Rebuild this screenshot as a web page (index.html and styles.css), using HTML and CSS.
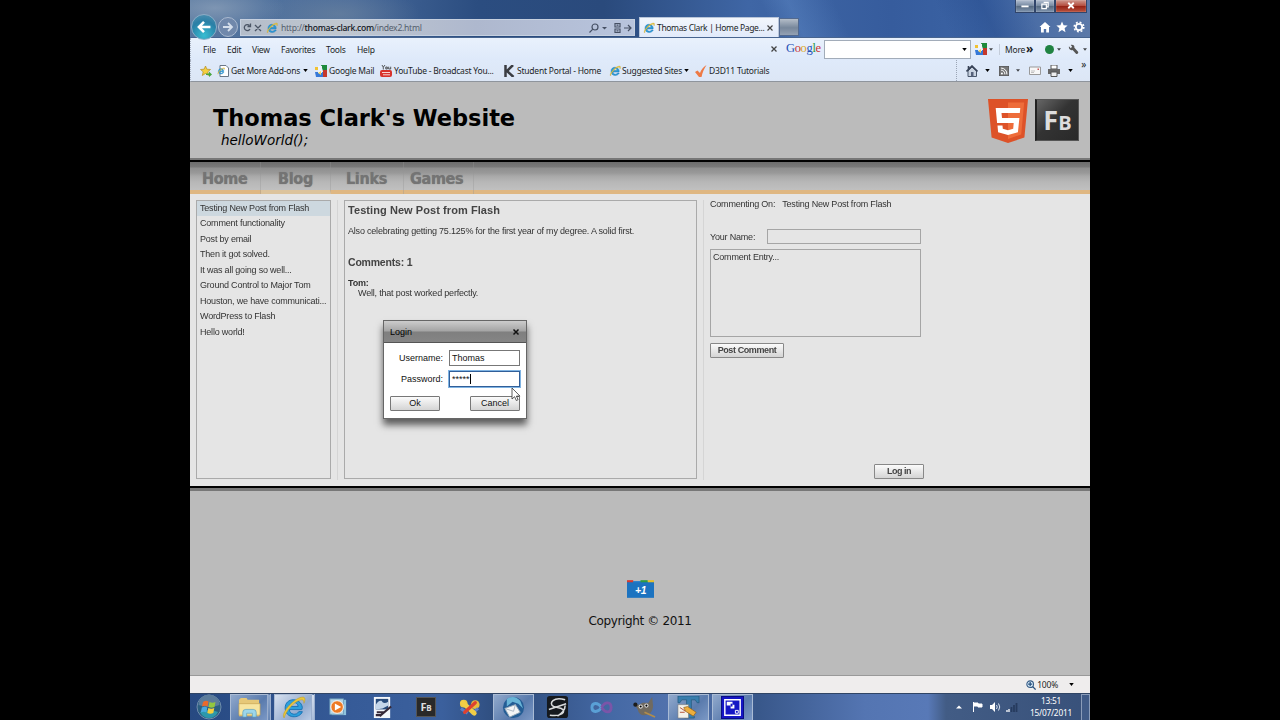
FILE: index.html
```
<!DOCTYPE html>
<html lang="en">
<head>
    <meta charset="UTF-8">
    <title>Thomas Clark | Home Page</title>
    <link rel="stylesheet" href="styles.css">
</head>
<body>
<svg class="defs">
    <symbol id="ie" viewBox="0 0 24 24">
        <path d="M20 14H8c.3 5 7 6 9 2h3.500C18 23 4 23 4 12.500S19 2 20.500 12zM8 11h8.500C16 6 9 6 8 11z" fill="#2d9fdc" stroke="#1672b4" stroke-width=".9"/>
        <path d="M3 22C-1 18 13 2 21 2c3 0 2 4 1 6 0-3-1-4-4-3C12 7 5 15 3 22z" fill="#e9c63b" stroke="#b99a28" stroke-width=".5"/>
    </symbol>
    <symbol id="caret" viewBox="0 0 6 4"><path d="M0 0h6L3 4z"/></symbol>
    <symbol id="goog" viewBox="0 0 12 12">
        <path d="M6 0h6v6H8z" fill="#1d8a3c"/><path d="M8 5h4v7H8z" fill="#c5392c"/><path d="M0 7h8v5H1z" fill="#3679d8"/><path d="M0 2h3v3H0z" fill="#f1c232"/><path d="M3 1h4v7H3z" fill="#eef3fb"/><path d="M3 8l3-2v4z" fill="#f5d65a"/>
    </symbol>
</svg>
<div class="screen">
    <div class="titlebar">
        <div class="winbtns">
            <span class="wb"><svg viewBox="0 0 20 12"><path d="M6 6h8v2H6z" fill="#fff"/></svg></span>
            <span class="wb"><svg viewBox="0 0 20 12"><path d="M8.500 2.500h5v5h-2M6.500 4.500h5v5h-5z" fill="none" stroke="#fff" stroke-width="1.300"/></svg></span>
            <span class="wb close"><svg viewBox="0 0 32 12"><path d="M13 3l6 6M19 3l-6 6" stroke="#fff" stroke-width="2"/></svg></span>
        </div>
        <div class="addressrow">
            <span class="back"><svg viewBox="0 0 26 26"><path d="M20 13H8M13 7.500L7.500 13l5.500 5.500" fill="none" stroke="#fff" stroke-width="2.800"/></svg></span>
            <span class="fwd"><svg viewBox="0 0 18 18"><path d="M4 9h9M9 5l4 4-4 4" fill="none" stroke="#d4deeb" stroke-width="1.800"/></svg></span>
            <div class="address">
                <svg class="reload" viewBox="0 0 20 10"><path d="M6.500 2.500A3 3 0 1 0 7 6M7.500 .5v3h-3M12 2l6 6M18 2l-6 6" fill="none" stroke="#4b5565" stroke-width="1.300"/></svg>
                <svg class="i12"><use href="#ie"/></svg>
                <span class="url">http://<b>thomas-clark.com</b>/index2.html</span>
                <svg class="search" viewBox="0 0 44 12"><g fill="none" stroke="#465064" stroke-width="1.200"><circle cx="7" cy="5" r="3"/><path d="M4.800 7.200L1.500 10.500M27 1.500h5v3.500h-5zM27 7h5v3.500h-5zM28.500 3.200h2M28.500 8.800h2M36 6h7M40 3l3 3-3 3"/></g><path d="M14 5h5l-2.500 2.600z" fill="#465064"/></svg>
            </div>
            <div class="tab">
                <svg class="i12"><use href="#ie"/></svg>
                <span class="tabtitle">Thomas Clark | Home Page...</span>
                <svg class="x" viewBox="0 0 8 8"><path d="M1.500 1.500l5 5M6.500 1.500l-5 5" stroke="#444" stroke-width="1.200"/></svg>
            </div>
            <div class="newtab"></div>
            <div class="tools">
                <svg viewBox="0 0 12 12"><path d="M6 1l5.500 5H10v5.500H7.200V8H4.800v3.500H2V6H.5z" fill="#fff"/></svg>
                <svg viewBox="0 0 12 12"><path d="M6 .5l1.600 3.800 4 .3-3 2.600.9 4L6 9l-3.500 2.200.9-4-3-2.600 4-.3z" fill="#fff"/></svg>
                <svg viewBox="0 0 12 12"><circle cx="6" cy="6" r="3.200" fill="none" stroke="#fff" stroke-width="1.800"/><circle cx="6" cy="6" r="4.800" fill="none" stroke="#fff" stroke-width="1.600" stroke-dasharray="1.900 1.870"/></svg>
            </div>
        </div>
    </div>

    <div class="menubar">
        <div class="menu"><span>File</span><span>Edit</span><span>View</span><span>Favorites</span><span>Tools</span><span>Help</span></div>
        <div class="gbar">
            <svg class="x" viewBox="0 0 8 8"><path d="M1.500 1.500l5 5M6.500 1.500l-5 5" stroke="#444" stroke-width="1.300"/></svg>
            <span class="google"><i class="b">G</i><i class="r">o</i><i class="y">o</i><i class="b">g</i><i class="g">l</i><i class="r">e</i></span>
            <div class="gsearch"><svg class="caret"><use href="#caret"/></svg></div>
            <svg class="i12"><use href="#goog"/></svg>
            <svg class="caret small"><use href="#caret"/></svg>
            <span class="more">More <b>»</b></span>
            <span class="dot"></span>
            <svg class="caret small"><use href="#caret"/></svg>
            <svg class="wrench" viewBox="0 0 12 12"><path d="M1 2.500l2 2 1.500-1.500L3 1c2-1 4.500.5 4 3l4 4.500c.8 1.500-1 3-2.300 2L5 6.500C2.500 7.500.5 5 1 2.500z" fill="#555"/></svg>
            <svg class="caret small"><use href="#caret"/></svg>
        </div>
    </div>

    <div class="favbar">
        <div class="favs">
            <svg class="i12" viewBox="0 0 12 12"><path d="M5.500 1l1.400 3.200 3.600.3-2.700 2.300.8 3.700-3.100-2-3.200 2 .9-3.700L.5 4.500l3.600-.3z" fill="#f6cf3e" stroke="#b58e1f" stroke-width=".7"/><path d="M6 8.500h3V6.500l3 3-3 2.500v-2H6z" fill="#46a73e"/></svg>
            <div class="fav f1"><svg class="i12" viewBox="0 0 12 12"><path d="M3 .5h6l2.500 2.500v8.500H3z" fill="#fff" stroke="#6b7786"/><svg x="0" y="2" width="8" height="8"><use href="#ie"/></svg></svg><span>Get More Add-ons</span><svg class="caret"><use href="#caret"/></svg></div>
            <div class="fav f2"><svg class="i12"><use href="#goog"/></svg><span>Google Mail</span></div>
            <div class="fav f3"><svg class="i12" viewBox="0 0 12 12"><rect y="5" width="12" height="7" rx="2" fill="#d8332c"/><path d="M2 7.500h8M3 9.800h7" stroke="#fff" stroke-width=".8"/><path d="M2 0l1.300 2.200V4.500M5 0L3.300 2.200M5.800 2h1.500v2H5.800zM8.700 1.700V4h2V1.700" fill="none" stroke="#333" stroke-width=".8"/></svg><span>YouTube - Broadcast You...</span></div>
            <div class="fav f4"><svg class="i12" viewBox="0 0 12 12"><path d="M2.500 0v12M10 0L4 6l6.500 6" fill="none" stroke="#3b3d42" stroke-width="2.500"/></svg><span>Student Portal - Home</span></div>
            <div class="fav f5"><svg class="i12"><use href="#ie"/></svg><span>Suggested Sites</span><svg class="caret"><use href="#caret"/></svg></div>
            <div class="fav f6"><svg class="i12" viewBox="0 0 12 12"><path d="M0 7l2.500-1.500L5 8c1-3 3-6 6.500-8C9 4 7.500 7.500 6.500 12H4z" fill="#ee7a45"/></svg><span>D3D11 Tutorials</span></div>
        </div>
        <div class="cmds">
            <svg class="i12" viewBox="0 0 12 12"><path d="M2 6l4-4 4.500 4v5.500H2z" fill="#c8d2e0" stroke="#49566a"/><path d="M.5 6.500L6 1l5.500 5.500M2.500 1v3" fill="none" stroke="#374256" stroke-width="1.600"/><path d="M5 7h2.500v4.500H5z" fill="#55617a"/></svg>
            <svg class="caret"><use href="#caret"/></svg>
            <svg class="i10" viewBox="0 0 12 12"><rect x=".5" y=".5" width="11" height="11" fill="#777" stroke="#555"/><path d="M2.500 5A4.500 4.500 0 0 1 7 10M2.500 2.500A7 7 0 0 1 9.500 10" fill="none" stroke="#fff" stroke-width="1.200"/><circle cx="3.500" cy="9" r="1.200" fill="#fff"/></svg>
            <svg class="caret small"><use href="#caret"/></svg>
            <svg class="i12" viewBox="0 0 12 12"><path d="M.5 2h11v7.500H.5z" fill="#f7f7f7" stroke="#999"/><path d="M8.500 3.500h1.500V5H8.500z" fill="#c55"/><path d="M2 6h4M2 7.500h3" stroke="#aaa" stroke-width=".7"/></svg>
            <svg class="i12" viewBox="0 0 12 12"><path d="M3 0h6v4H3z" fill="#fff" stroke="#555"/><path d="M0 4h12v5H0z" fill="#666"/><path d="M3 7h6v4.500H3z" fill="#eee" stroke="#555"/></svg>
            <svg class="caret"><use href="#caret"/></svg>
            <span class="chev">»</span>
        </div>
    </div>

    <div class="header">
        <div class="brand">
            <h1>Thomas Clark's Website</h1>
            <p>helloWorld();</p>
        </div>
        <div class="logos">
            <svg class="html5" viewBox="0 0 40 44"><path d="M0 0h40l-3.600 38.500L20 44 3.600 38.500z" fill="#dd5228"/><path d="M20 3.500h16.200l-3 32L20 40z" fill="#ee6c3a"/><path d="M7.700 9h24.600l-.5 5H13.500l.5 5h17.400l-1.500 14.200L20 36l-9.900-2.800-.6-6.700h5l.3 3.200 5.200 1.500 5.200-1.500.5-5.700H9.100z" fill="#fff"/></svg>
            <div class="fb">F<small>B</small></div>
        </div>
    </div>

    <div class="nav"><a class="n1">Home</a><a class="n2">Blog</a><a class="n3">Links</a><a class="n4">Games</a></div>

    <div class="content">
        <div class="blog">
            <ul class="posts">
                <li class="selected">Testing New Post from Flash</li>
                <li>Comment functionality</li>
                <li>Post by email</li>
                <li>Then it got solved.</li>
                <li>It was all going so well...</li>
                <li>Ground Control to Major Tom</li>
                <li>Houston, we have communicati...</li>
                <li>WordPress to Flash</li>
                <li>Hello world!</li>
            </ul>
            <div class="divider"></div>
            <div class="post">
                <h2>Testing New Post from Flash</h2>
                <p class="body">Also celebrating getting 75.125% for the first year of my degree. A solid first.</p>
                <h3>Comments: 1</h3>
                <h4>Tom:</h4>
                <p class="reply">Well, that post worked perfectly.</p>
            </div>
            <div class="divider"></div>
            <div class="form">
                <div class="on"><span>Commenting On:</span><span>Testing New Post from Flash</span></div>
                <div class="name"><span>Your Name:</span><div class="field"></div></div>
                <div class="entry">Comment Entry...</div>
                <div class="btn post-btn">Post Comment</div>
                <div class="btn login-btn">Log in</div>
            </div>
        </div>
        <div class="dialog">
            <div class="dtitle"><span>Login</span><svg viewBox="0 0 8 8"><path d="M1.500 1.500l5 5M6.500 1.500l-5 5" stroke="#111" stroke-width="1.500"/></svg></div>
            <div class="drow"><label>Username:</label><div class="dfield">Thomas</div></div>
            <div class="drow"><label>Password:</label><div class="dfield focus">*****<i></i></div></div>
            <div class="dbtns"><div class="btn">Ok</div><div class="btn">Cancel</div></div>
        </div>
        <svg class="cursor" viewBox="0 0 10 16"><path d="M1 1v11l2.600-2.300L5.300 13.500l1.800-.8-1.700-3.600H9z" fill="#fff" stroke="#333" stroke-width=".8"/></svg>
    </div>

    <div class="footer">
        <svg class="plusone" viewBox="0 0 26 17"><rect y="1" width="26" height="16" fill="#1c73c0"/><path d="M0 0h6v2H0z" fill="#d63a2e"/><path d="M6 1h7v1H6z" fill="#2b83d2"/><path d="M13 0h7v2h-7z" fill="#2f9c42"/><path d="M20 0h6v2h-6z" fill="#e6bf2b"/><text x="13" y="13" text-anchor="middle">+1</text></svg>
        <p>Copyright © 2011</p>
    </div>

    <div class="status">
        <svg class="i10" viewBox="0 0 12 12"><circle cx="5" cy="5" r="4" fill="#d9ecfa" stroke="#375c85" stroke-width="1.300"/><path d="M5 2.500v5M2.500 5h5M8 8l3.500 3.500" stroke="#27507d" stroke-width="1.500"/></svg>
        <span>100%</span>
        <svg class="caret"><use href="#caret"/></svg>
    </div>

    <div class="taskbar">
        <div class="orb"><svg viewBox="0 0 26 26"><circle cx="13" cy="13" r="12" fill="#2b5f80" stroke="#6f8cab"/><path d="M2.500 11a10.500 10.500 0 0 1 21 0Q13 15 2.500 11z" fill="#5c7c9b"/><path d="M4 18q9-4 18 0-3 6-9 6t-9-6z" fill="#2c98ab"/><path d="M7 8q3-2 5.500-.5l-1 5Q9 11 6 12.500z" fill="#ea6a2c"/><path d="M13.500 8q3 1.500 6 0l-1 5q-3 1.500-6 0z" fill="#93c83e"/><path d="M5.800 13.500q3-1.500 5.500 0l-1 5q-2.500-1.500-5.500 0z" fill="#49a9e0"/><path d="M12.300 14q3 1.500 6 0l-1 5q-3 1.500-6 0z" fill="#f7cf3a"/></svg></div>
        <div class="slot open stack"><svg viewBox="0 0 24 24"><path d="M1 4l2-2h6l1 2h12v17H1z" fill="#e6c878"/><path d="M1 8h22v12H1z" fill="#f7e5a0" stroke="#c6a351" stroke-width=".7"/><path d="M5 22v-5q0-3 3-3h8q3 0 3 3v5h-4v-4H9v4z" fill="#9cd6ea" stroke="#5a9dbd" stroke-width=".7"/></svg></div>
        <div class="slot open stack lit"><svg class="big"><use href="#ie"/></svg></div>
        <div class="slot"><svg class="mid" viewBox="0 0 20 20"><rect x="3" y="2" width="16" height="17" fill="#8fc3de"/><rect x="1" y="1" width="15" height="17" fill="#b8d8e8" stroke="#6d9dbb"/><circle cx="9" cy="10" r="7" fill="#ed7a24" stroke="#fff"/><path d="M6.500 6l7 4-7 4z" fill="#fff"/></svg></div>
        <div class="slot"><svg viewBox="0 0 24 24"><path d="M3 1h17v22H3z" fill="#f3f6fb"/><path d="M5 3h13v11H5z" fill="#284b7b"/><path d="M5 9q3-5 6-4 2 4 7 1v4l-6 3-7 1z" fill="#c4d6ea"/><path d="M6 17h8M5 20h6M9 21l12-10" stroke="#352837" stroke-width="2.200"/></svg></div>
        <div class="slot"><div class="fbsmall">F<small>B</small></div></div>
        <div class="slot"><svg viewBox="0 0 24 24"><circle cx="6" cy="8" r="4" fill="#ecc83f"/><circle cx="18" cy="9" r="4.500" fill="#e8bb3d"/><path d="M3 13l7 5M14 19l7-6" stroke="#5b7fc7" stroke-width="3"/><path d="M5 7l12 11" stroke="#f2ce46" stroke-width="5" stroke-linecap="round"/><path d="M18 7L7 17" stroke="#dd4130" stroke-width="3.500" stroke-linecap="round"/></svg></div>
        <div class="slot open"><svg viewBox="0 0 24 24"><circle cx="12" cy="12" r="11" fill="#245d95"/><path d="M5 3q8-5 14 2l3 8-5-5-6-2-6 5z" fill="#68b4d7"/><path d="M3 13l11-4 5 8-11 5z" fill="#f4f5f6" stroke="#98aaba"/><path d="M3 13l9 3 2-7" fill="none" stroke="#aab6c2"/></svg></div>
        <div class="slot"><svg viewBox="0 0 24 24"><rect x="1" y="0" width="22" height="23" rx="3" fill="#15191e"/><path d="M20 4C8 0 2 8 8 11l8 2c6 3 0 9-12 7M21 8L3 14M20 10q0 6-8 11" fill="none" stroke="#d8dadc" stroke-width="1.600"/></svg></div>
        <div class="slot"><svg viewBox="0 0 24 24"><path d="M12 12C8 6 2 7 2 12s6 6 10 0" fill="none" stroke="#5aa0d6" stroke-width="3"/><path d="M12 12c4-7 10-6 10 0s-6 6-10 0" fill="none" stroke="#7b55a8" stroke-width="3"/></svg></div>
        <div class="slot"><svg viewBox="0 0 24 24"><path d="M1 8l5 1 4-2 6 0 4-6 1 10q-1 9-9 9-6 0-7-6z" fill="#706a5f"/><circle cx="8" cy="11" r="2.200" fill="#ddd"/><circle cx="14" cy="10" r="2.200" fill="#ddd"/><circle cx="8" cy="11" r="1.100"/><circle cx="14" cy="10" r="1.100"/><circle cx="2.500" cy="9" r="2.200" fill="#1c1c1c"/><path d="M12 17l11 5" stroke="#b28d4a" stroke-width="1.800"/></svg></div>
        <div class="slot open"><svg viewBox="0 0 24 24"><path d="M1 0h22v7h-2l-2-3h-4v15l3 2v2H8v-2l2-2V4H5L3 7H1z" fill="#387eae" stroke="#205779" stroke-width=".7"/><path d="M1 9h11v14H1z" fill="#f3f1ea" stroke="#777" stroke-width=".6"/><path d="M3 12l6 4M3 17h5" stroke="#b35037"/><path d="M7 12l4-1 9 6-3 4-8-5z" fill="#edae3d" stroke="#8d5d1d" stroke-width=".7"/></svg></div>
        <div class="slot open"><svg viewBox="0 0 24 24"><rect x=".5" y=".5" width="23" height="23" fill="#1516c5" stroke="#080b83"/><path d="M4 4h16v16H4z" fill="none" stroke="#fff" stroke-width="1.500"/><path d="M6 6h6v3h2v4h-4v-3H6z" fill="#fff"/><path d="M10 8h2v3h-2z" fill="#1516c5"/><path d="M15 15h3v3h-3z" fill="none" stroke="#fff"/></svg></div>
        <div class="tray">
            <svg class="up" viewBox="0 0 6 4"><path d="M0 3.500h6L3 .5z" fill="#fff"/></svg>
            <svg class="t" viewBox="0 0 12 12"><path d="M1.500 1v10M2 2h4v1h4v3H6V5H2z" fill="#fff" stroke="#fff" stroke-width="1"/></svg>
            <svg class="t" viewBox="0 0 12 12"><path d="M1 4h2l3-3v10L3 8H1z" fill="#fff"/><path d="M7.500 4q1.500 2 0 4M9.500 2.500q2.500 3.500 0 7" fill="none" stroke="#dce5f1"/></svg>
            <svg class="t" viewBox="0 0 12 12"><path d="M1 11V9M3 11V8" stroke="#fff" stroke-width="1.300"/><path d="M5.500 11V6M8 11V4M10.500 11V2" stroke="#263b5e" stroke-width="1.800"/></svg>
            <div class="clock">13:51<br>15/07/2011</div>
            <div class="peek"></div>
        </div>
    </div>
</div>
</body>
</html>
```

FILE: styles.css
```
*{
    box-sizing: border-box;
}
body{
    margin:0;
    background: #000;
    overflow: hidden;
}
h1, h2, h3, h4, p, ul{
    margin:0;
    padding:0;
}
svg{
    display: block;
    flex: none;
}
.defs{
    position: absolute;
    width:0;
    height:0;
}
.screen{
    width:900px;
    height:720px;
    margin:0 auto;
    display: flex;
    flex-direction: column;
    font-family: "Noto Sans", "Open Sans", sans-serif;
    font-size: 8.5px;
    letter-spacing: -.22px;
    color:#1c1f26;
    white-space: nowrap;
}
.i12{
    width:12px;
    height:12px;
}
.i10{
    width:10px;
    height:10px;
}
.x{
    width:8px;
    height:8px;
}
.caret{
    width:5px;
    height:3px;
}
.small{
    width:4px;
    opacity: .7;
}

/* browser window */
.titlebar{
    height:38px;
    background:
        radial-gradient(ellipse 70px 24px at 25px 8px, rgba(140,160,185,.75), transparent),
        radial-gradient(ellipse 80px 28px at 150px 14px, rgba(120,140,160,.5), transparent),
        linear-gradient(65deg, transparent 64%, rgba(110,155,215,.3) 67%, transparent 72%, transparent 83%, rgba(30,65,130,.35) 88%, transparent 93%),
        linear-gradient(90deg, #56779f, #47699a 18%, #2b4d80 32%, #2a4a7c 46%, #3f66a5 62%, #365c9d 78%, #3b63a4 88%, #5c79a8);
    border-bottom: 1px solid #47648f;
}
.winbtns{
    display: flex;
    justify-content: flex-end;
    height:13px;
    padding-right:3px;
}
.wb{
    width:20px;
    border:1px solid #31456a;
    border-top:0;
    background: linear-gradient(#b3bfd1, #74879f 50%, #56697f 52%, #8196b0);
    box-shadow: inset 0 0 1px #fff;
}
.wb svg{
    width:100%;
    height:11px;
}
.close{
    width:32px;
    background: linear-gradient(#cf9a90, #b34b3c 50%, #952215 52%, #b9523e);
}
.addressrow{
    display: flex;
    align-items: center;
    height:24px;
}
.back{
    width:26px;
    height:26px;
    margin:3px 0 0 1px;
    border-radius: 50%;
    background: radial-gradient(circle at 50% 85%, #38bdd2, #2a7fa6 60%, #5893b2);
    border:1px solid #8cadc6;
    z-index: 1;
}
.fwd{
    width:20px;
    height:20px;
    border-radius: 50%;
    background: #7088ab;
    border:1px solid #a9b9cf;
    margin:3px 0 0 1px;
}
.address{
    display: flex;
    align-items: center;
    width:395px;
    height:17px;
    margin:5px 4px 0 2px;
    padding-left:2px;
    background: linear-gradient(90deg, #b4bdca, #c0c7cf 25%, #aeb8ce 60%, #b8c4dd);
    border:1px solid #c6d0df;
}
.reload{
    width:20px;
    height:10px;
    margin-right:3px;
}
.url{
    margin-left:3px;
    font-size: 8.6px;
    letter-spacing: -.28px;
    color:#555e6d;
}
.url b{
    font-weight: 500;
    color:#10141b;
}
.search{
    width:44px;
    height:12px;
    margin-left:auto;
    margin-right:2px;
}
.tab{
    display: flex;
    align-items: center;
    width:140px;
    height:20px;
    margin-top:4px;
    padding:0 4px 0 3px;
    background: linear-gradient(#f2f6fc, #e1eafa);
    border:1px solid #b8c5d9;
    border-bottom:0;
}
.tabtitle{
    margin:0 auto 0 2px;
    letter-spacing: -.35px;
}
.newtab{
    width:20px;
    height:18px;
    margin-top:4px;
    background: linear-gradient(#b4bdc8, #77879b 55%, #94a1b3);
    border:1px solid #52698f;
}
.tools{
    display: flex;
    gap:5px;
    margin-left:auto;
    padding:4px 5px 0 0;
}
.tools svg{
    width:12px;
    height:12px;
}
.menubar{
    display: flex;
    justify-content: space-between;
    height:22px;
    background: linear-gradient(#e9f1fc, #deE9fa);
    border-left:1px dotted #a8b1c0;
}
.menu{
    display: grid;
    grid-template-columns: 24px 25px 29px 45px 31px 30px;
    align-items: center;
    padding-left:12px;
}
.gbar{
    display: flex;
    align-items: center;
    padding-right:3px;
}
.google{
    width:36px;
    margin:0 2px 2px 8px;
    font-family: "Liberation Serif", serif;
    font-size: 12.5px;
    letter-spacing: -.35px;
}
.google i{
    font-style: normal;
}
.b{ color:#2451b5; }
.r{ color:#c93535; }
.y{ color:#dba825; }
.g{ color:#2c963d; }
.gsearch{
    display: flex;
    align-items: center;
    justify-content: flex-end;
    width:147px;
    height:19px;
    margin-right:4px;
    padding-right:3px;
    background: #fff;
    border:1px solid #a2acb9;
}
.gbar .i12{
    margin-right:2px;
}
.more{
    margin-left:6px;
    padding-left:5px;
    border-left:1px solid #c4cdda;
    width:42px;
    margin-right:4px;
}
.more b{
    font-size: 12px;
    line-height: 8px;
    margin-left:-1px;
}
.dot{
    width:9px;
    height:9px;
    margin-right:3px;
    border-radius: 50%;
    background: #208342;
}
.wrench{
    width:11px;
    height:11px;
    margin:0 4px 0 7px;
}
.favbar{
    display: flex;
    justify-content: space-between;
    height:22px;
    background: linear-gradient(#dfeafa, #dce6f5);
    border-left:1px dotted #a8b1c0;
    border-bottom:1px solid #8e949c;
}
.favs{
    display: flex;
    align-items: center;
    padding-left:9px;
}
.fav{
    display: flex;
    align-items: center;
    gap:2px;
}
.fav .caret{
    margin-left:1px;
}
.f1{
    width:98px;
    margin-left:5px;
}
.f2{
    width:65px;
}
.f3{
    width:123px;
}
.f4{
    width:106px;
}
.f5{
    width:86px;
    gap:1px;
}
.cmds{
    display: flex;
    align-items: center;
    gap:7.500px;
    padding-right:4px;
    border-left:1px dotted #9ba5b5;
    padding-left:9px;
}
.cmds .caret{
    margin-right:1px;
}
.chev{
    align-self: flex-start;
    font-size: 10px;
    line-height: 8px;
}

/* page */
.header{
    display: flex;
    justify-content: space-between;
    height:80px;
    padding:23px 11px 0 23px;
    background: #bbb;
    border-bottom:2px solid #000;
    box-shadow: inset 0 -2px 0 #777;
    font-family: "DejaVu Sans", sans-serif;
    letter-spacing: 0;
    color:#000;
}
.brand h1{
    font-size: 22.500px;
    line-height: 27px;
    letter-spacing: -.03px;
}
.brand p{
    padding-left:8px;
    font-size: 13.500px;
    font-style: italic;
    line-height: 16px;
}
.logos{
    display: flex;
    gap:7px;
    margin-top:-6px;
}
.html5{
    width:40px;
    height:44px;
}
.fb{
    width:44px;
    height:42px;
    background: linear-gradient(135deg, #666, #333 45%, #292929);
    border:1px solid #555;
    border-left:2px solid #222;
    color:#ddd;
    font: bold 27px/39px "Open Sans", sans-serif;
    text-align: center;
}
.fb small{
    font-size: 20px;
}
.nav{
    display: flex;
    height:32px;
    background: linear-gradient(#6c6c6c 0, #797979 5px, #8e8e8e 6px, #999 11px, #a8a8a8 14px, #b7b7b7 20px, #c0c0c0 28px);
    border-bottom:4px solid #dfb782;
    font: bold 16px/33px "DejaVu Sans Condensed", "DejaVu Sans", sans-serif;
    font-stretch: condensed;
    letter-spacing: -.3px;
    color:#747474;
}
.nav a{
    height:32px;
    text-shadow: 0 0 1px #777;
    border-right:1px solid rgba(150,150,150,.35);
}
.n1{ width:71px; padding-left:12px; }
.n2{ width:70px; padding-left:17px; border-bottom:4px solid #dcc39c; }
.n3{ width:73px; padding-left:15px; }
.n4{ width:70px; padding-left:6px; }
.content{
    position: relative;
    height:292px;
    background: #e5e5e5;
    font-family: "Liberation Sans", Arial, sans-serif;
}
/* blurred while the login box is open */
.blog{
    display: flex;
    height:292px;
    padding:6px 0 0 6px;
    font-size: 9px;
    letter-spacing: -.2px;
    color:#333;
    filter: blur(.5px);
}
.posts{
    width:135px;
    height:279px;
    list-style: none;
    border:1px solid #aaa;
}
.posts li{
    height:15.450px;
    line-height: 15px;
    padding-left:3px;
}
.posts .selected{
    background: #cdd8df;
}
.divider{
    width:1px;
    height:280px;
    margin:0 6px;
    background: #d5d5d5;
}
.post{
    width:353px;
    height:279px;
    padding:2px 3px;
    border:1px solid #aaa;
}
.post h2{
    font-size: 11px;
    line-height: 14px;
    letter-spacing: .07px;
    color:#444;
}
.body{
    margin-top:8px;
    line-height: 12px;
}
.post h3{
    margin-top:18px;
    font-size: 10.500px;
    line-height: 14px;
    color:#444;
}
.post h4{
    margin-top:9px;
    font-size: 9px;
    line-height: 10px;
}
.reply{
    padding-left:10px;
    line-height: 10px;
}
.form{
    display: flex;
    flex-direction: column;
    width:215px;
}
.on{
    display: flex;
    gap:7px;
    line-height: 9px;
}
.name{
    display: flex;
    align-items: center;
    justify-content: space-between;
    width:211px;
    margin-top:20px;
    height:15px;
}
.field{
    width:154px;
    height:15px;
    border:1px solid #a5a5a5;
}
.entry{
    width:211px;
    height:88px;
    margin-top:5px;
    padding:2px;
    line-height: 11px;
    border:1px solid #a5a5a5;
}
.btn{
    width:50px;
    height:15px;
    border:1px solid #777;
    border-radius: 1px;
    background: linear-gradient(#fbfbfb, #d4d4d4);
    line-height: 13px;
    text-align: center;
}
.form .btn{
    border-color:#888;
    font-weight: bold;
    color:#444;
}
.form .post-btn{
    width:74px;
    margin-top:6px;
    letter-spacing: -.4px;
}
.form .login-btn{
    margin-top:106px;
    margin-left:164px;
    letter-spacing: -.5px;
}
.dialog{
    position: absolute;
    left:193px;
    top:126px;
    width:144px;
    height:99px;
    background: #fff;
    border:1px solid #666;
    box-shadow: 0 6px 7px rgba(0,0,0,.6);
    font-size: 9px;
    letter-spacing: 0;
    color:#111;
}
.dtitle{
    display: flex;
    align-items: center;
    justify-content: space-between;
    height:22px;
    padding:0 6px;
    background: linear-gradient(#ccc, #a4a4a4 48%, #7f7f7f 52%, #858585);
    border-bottom:1px solid #555;
    color:#000;
}
.dtitle svg{
    width:8px;
    height:8px;
}
.drow{
    display: flex;
    justify-content: flex-end;
    align-items: center;
    gap:6px;
    height:16px;
    margin:7px 6px 0 0;
}
.drow + .drow{
    margin-top:5px;
}
.dfield{
    display: flex;
    align-items: center;
    width:71px;
    height:16px;
    padding-left:2px;
    border:1px solid #777;
}
.focus{
    border-color:#315f99;
    box-shadow: 0 0 0 1px #80b4e3;
}
.focus i{
    width:1px;
    height:10px;
    background: #000;
}
.dbtns{
    display: flex;
    justify-content: space-between;
    padding:9px 6px 0;
}
.cursor{
    position: absolute;
    left:321px;
    top:193px;
    width:10px;
    height:16px;
}
.footer{
    display: flex;
    flex-direction: column;
    align-items: center;
    height:190px;
    padding-top:90px;
    background: #bbb;
    border-top:2px solid #000;
    border-bottom:1px solid #999;
    box-shadow: inset 0 3px 0 #777;
    font: 12px/16px "DejaVu Sans", sans-serif;
    letter-spacing: -.35px;
    color:#111;
}
.plusone{
    width:27px;
    height:18px;
    margin:2px 0 15px;
    font: italic bold 10px "Liberation Sans", sans-serif;
    fill: #fff;
}
.status{
    display: flex;
    justify-content: flex-end;
    align-items: center;
    height:17px;
    padding-right:16px;
    background: #efeded;
}
.status span{
    margin:0 11px 0 1px;
}

/* windows taskbar */
.taskbar{
    display: flex;
    align-items: center;
    height:27px;
    background: linear-gradient(90deg, #274981, #365b98 18%, #3b609d 28%, #2d4b7a 35%, #4569a5 47%, #5474af 55%, #38578a 63%, #5475b2 75%, #5879b7 82%, #425c85 84%, #38517a);
    border-top:1px solid #304565;
}
.orb{
    width:39px;
    padding-left:6px;
}
.orb svg{
    width:26px;
    height:26px;
}
.slot{
    display: flex;
    align-items: center;
    justify-content: center;
    width:41px;
    height:27px;
    margin:0 1.400px;
}
.slot svg{
    width:23px;
    height:23px;
}
.slot .mid{
    width:18px;
    height:18px;
}
.slot .big{
    width:25px;
    height:25px;
}
.open{
    border:1px solid #a9bbd5;
    background: linear-gradient(135deg, #91a9cc, #5a7bad 60%, #7b98c5);
}
.stack{
    border-right:4px double #9bafce;
}
.lit{
    background: linear-gradient(135deg, #d8e1ef, #91aacf 65%, #bacbe4);
}
.fbsmall{
    width:20px;
    height:20px;
    background: #292929;
    border:1px solid #555;
    color:#ddd;
    font: bold 11px/17px "Open Sans", sans-serif;
    text-align: center;
}
.fbsmall small{
    font-size: 8px;
}
.tray{
    display: flex;
    align-items: center;
    margin-left:auto;
    height:27px;
    color:#fff;
}
.t{
    width:12px;
    height:12px;
    margin-right:5px;
}
.up{
    width:6px;
    height:4px;
    margin-right:10px;
}
.clock{
    width:46px;
    margin:0 7px 0 5px;
    font-size: 8.3px;
    line-height: 12px;
    text-align: center;
}
.peek{
    width:9px;
    height:27px;
    border:1px solid #8a9cb9;
    background: #405b87;
}
```
